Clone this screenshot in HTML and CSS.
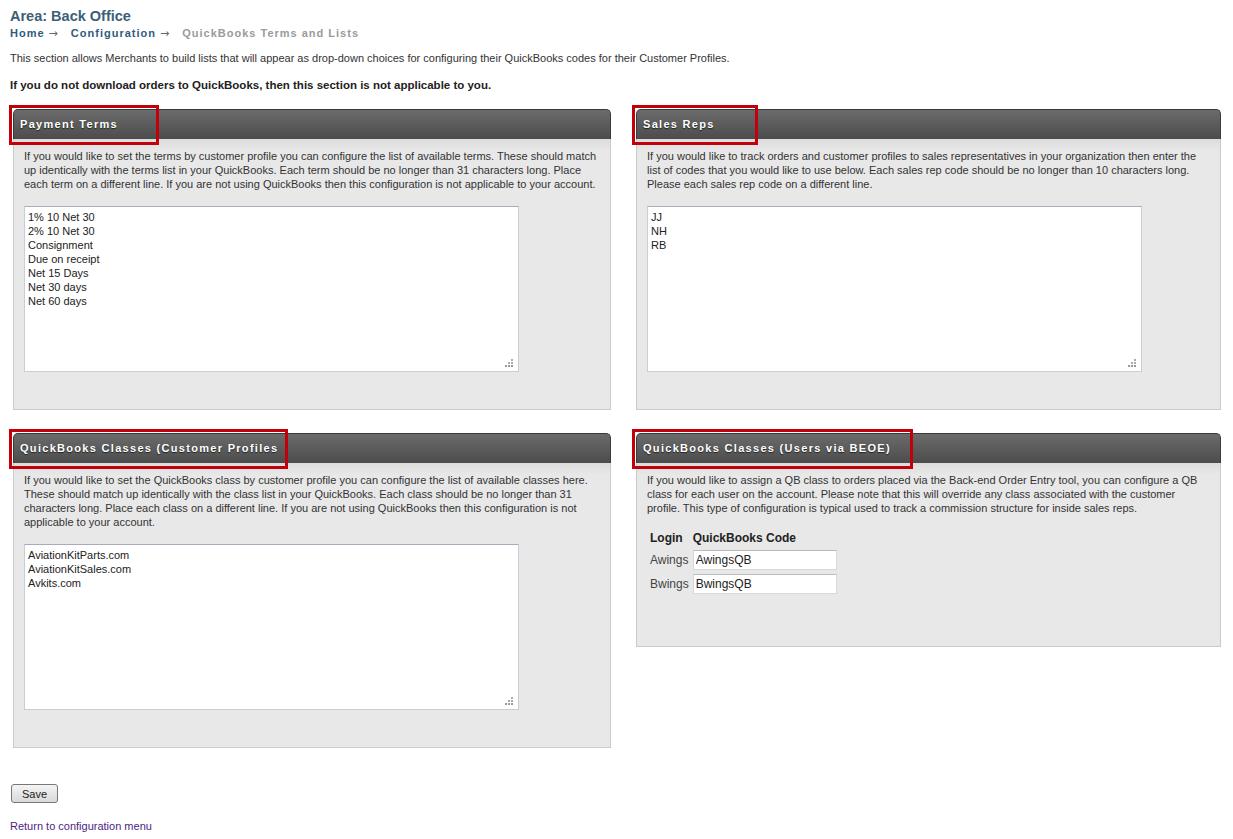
FILE: index.html
```html
<!DOCTYPE html>
<html>
    <head>
        <meta http-equiv="Content-Type" content="text/html;charset=UTF-8">
        <title>QuickBooks Terms and Lists</title>
        <link rel="stylesheet" href="styles.css">
    </head>
    <body>

        <h1 class="area">Area: Back Office</h1>
        <div class="crumbs">
            <a href="#">Home</a><span class="arr">&rarr;</span>
            <a href="#">Configuration</a><span class="arr">&rarr;</span>
            <span class="here">QuickBooks Terms and Lists</span>
        </div>

        <p class="intro">This section allows Merchants to build lists that will appear as drop-down choices for configuring their QuickBooks codes for their Customer Profiles.</p>
        <p class="warn">If you do not download orders to QuickBooks, then this section is not applicable to you.</p>

        <form class="lists">

            <div class="panel">
                <div class="mark" style="width:144px"></div>
                <div class="head">Payment Terms</div>
                <div class="body">
                    <p>If you would like to set the terms by customer profile you can configure the list of available terms. These should match up identically with the terms list in your QuickBooks. Each term should be no longer than 31 characters long. Place each term on a different line. If you are not using QuickBooks then this configuration is not applicable to your account.</p>
                    <textarea>1% 10 Net 30
2% 10 Net 30
Consignment
Due on receipt
Net 15 Days
Net 30 days
Net 60 days</textarea>
                </div>
            </div>

            <div class="panel right">
                <div class="mark" style="width:120px"></div>
                <div class="head">Sales Reps</div>
                <div class="body">
                    <p>If you would like to track orders and customer profiles to sales representatives in your organization then enter the list of codes that you would like to use below. Each sales rep code should be no longer than 10 characters long. Please each sales rep code on a different line.</p>
                    <textarea>JJ
NH
RB</textarea>
                </div>
            </div>

            <div class="panel">
                <div class="mark" style="width:273px"></div>
                <div class="head">QuickBooks Classes (Customer Profiles</div>
                <div class="body">
                    <p>If you would like to set the QuickBooks class by customer profile you can configure the list of available classes here. These should match up identically with the class list in your QuickBooks. Each class should be no longer than 31 characters long. Place each class on a different line. If you are not using QuickBooks then this configuration is not applicable to your account.</p>
                    <textarea>AviationKitParts.com
AviationKitSales.com
Avkits.com</textarea>
                </div>
            </div>

            <div class="panel right">
                <div class="mark" style="width:275px"></div>
                <div class="head">QuickBooks Classes (Users via BEOE)</div>
                <div class="body users">
                    <p>If you would like to assign a QB class to orders placed via the Back-end Order Entry tool, you can configure a QB class for each user on the account. Please note that this will override any class associated with the customer profile. This type of configuration is typical used to track a commission structure for inside sales reps.</p>
                    <table>
                        <tr><th>Login</th><th>QuickBooks Code</th></tr>
                        <tr><td>Awings</td><td><input type="text" value="AwingsQB"></td></tr>
                        <tr><td>Bwings</td><td><input type="text" value="BwingsQB"></td></tr>
                    </table>
                </div>
            </div>

        </form>

        <button class="save" type="button">Save</button>
        <a class="back" href="#">Return to configuration menu</a>

    </body>
</html>
```

FILE: styles.css
```css
body {
    margin: 0;
    padding: 8px 10px;
    background: #fff;
    font-family: "Liberation Sans", Arial, sans-serif;
    font-size: 11px;
    color: #333;
}
h1.area {
    margin: 0;
    font-size: 14.5px;
    line-height: 16px;
    color: #3c6077;
}
.crumbs {
    margin-top: 2px;
    font-size: 11px;
    line-height: 14px;
    font-weight: bold;
    letter-spacing: 1px;
}
.crumbs a {
    color: #2f5b7d;
    text-decoration: none;
}
.crumbs .arr {
    font-family: "DejaVu Sans", sans-serif;
    color: #666;
    font-weight: normal;
    font-size: 11px;
    letter-spacing: 0;
    margin: 0 9px 0 4px;
}
.crumbs .here {color: #9a9a9a;}
p.intro {
    margin: 10px 0 0 0;
    line-height: 14px;
}
p.warn {
    margin: 13px 0 0 0;
    font-size: 11.5px;
    line-height: 14px;
    font-weight: bold;
    color: #222;
}

.lists {
    display: grid;
    grid-template-columns: 598px 585px;
    column-gap: 25px;
    row-gap: 23px;
    align-items: start;
    margin: 17px 0 0 3px;
}
.panel {position: relative;}
.mark {
    position: absolute;
    left: -4px;
    top: -4px;
    height: 34px;
    border: 3px solid #c1000b;
    z-index: 2;
}
.head {
    height: 30px;
    line-height: 29px;
    padding: 0 6px;
    background: linear-gradient(#6b6b6b, #4c4c4c);
    border: 1px solid #3a3a3a;
    border-bottom: 0;
    border-radius: 5px 5px 0 0;
    box-sizing: border-box;
    color: #fff;
    font-size: 11px;
    font-weight: bold;
    letter-spacing: 1.3px;
    text-shadow: 0 1px 1px #222;
}
.body {
    background: linear-gradient(#dcdcdc, #e8e8e8 12px);
    border: 1px solid #cbcbcb;
    border-top: 0;
    padding: 10px 8px 37px 10px;
}
.right .body {padding-right: 14px;}
.body p {
    margin: 0 0 15px 0;
    line-height: 14px;
    color: #333;
}
.body textarea {
    display: block;
    width: 495px;
    height: 166px;
    box-sizing: border-box;
    margin: 0;
    padding: 3px 3px;
    border: 1px solid #c6cfd8;
    border-top-color: #aab;
    font-family: "Liberation Sans", Arial, sans-serif;
    font-size: 11px;
    line-height: 14px;
    color: #222;
    resize: none;
    /* dotted grip in the corner */
    background-color: #fff;
    background-image:
        linear-gradient(#999, #999), linear-gradient(#999, #999), linear-gradient(#999, #999),
        linear-gradient(#aaa, #aaa), linear-gradient(#aaa, #aaa),
        linear-gradient(#aaa, #aaa);
    background-size: 2px 2px;
    background-repeat: no-repeat;
    background-position:
        right 5px bottom 4px, right 8px bottom 4px, right 11px bottom 4px,
        right 5px bottom 7px, right 8px bottom 7px,
        right 5px bottom 10px;
}
.body.users {padding-bottom: 48px;}
.body.users p {margin-bottom: 12px;}
.users table {
    border-collapse: separate;
    border-spacing: 4px 4px;
    margin-left: -1px;
    font-size: 12px;
}
.users th {
    text-align: left;
    padding: 0 0 1px 0;
    color: #222;
}
.users td {
    padding: 0;
    color: #444;
}
.users input {
    width: 144px;
    height: 20px;
    box-sizing: border-box;
    border: 1px solid #d8d8d8;
    border-top-color: #bbb;
    padding: 0 2px;
    font-family: "Liberation Sans", Arial, sans-serif;
    font-size: 12px;
    color: #222;
}

.save {
    display: block;
    margin: 36px 0 0 1px;
    width: 47px;
    height: 19px;
    padding: 0;
    font-family: "Liberation Sans", Arial, sans-serif;
    font-size: 11px;
    color: #222;
    border: 1px solid #777;
    border-radius: 3px;
    background: linear-gradient(#f4f4f4, #d9d9d9);
}
.back {
    display: inline-block;
    margin-top: 16px;
    color: #4d1d86;
    text-decoration: none;
    line-height: 14px;
}
```
